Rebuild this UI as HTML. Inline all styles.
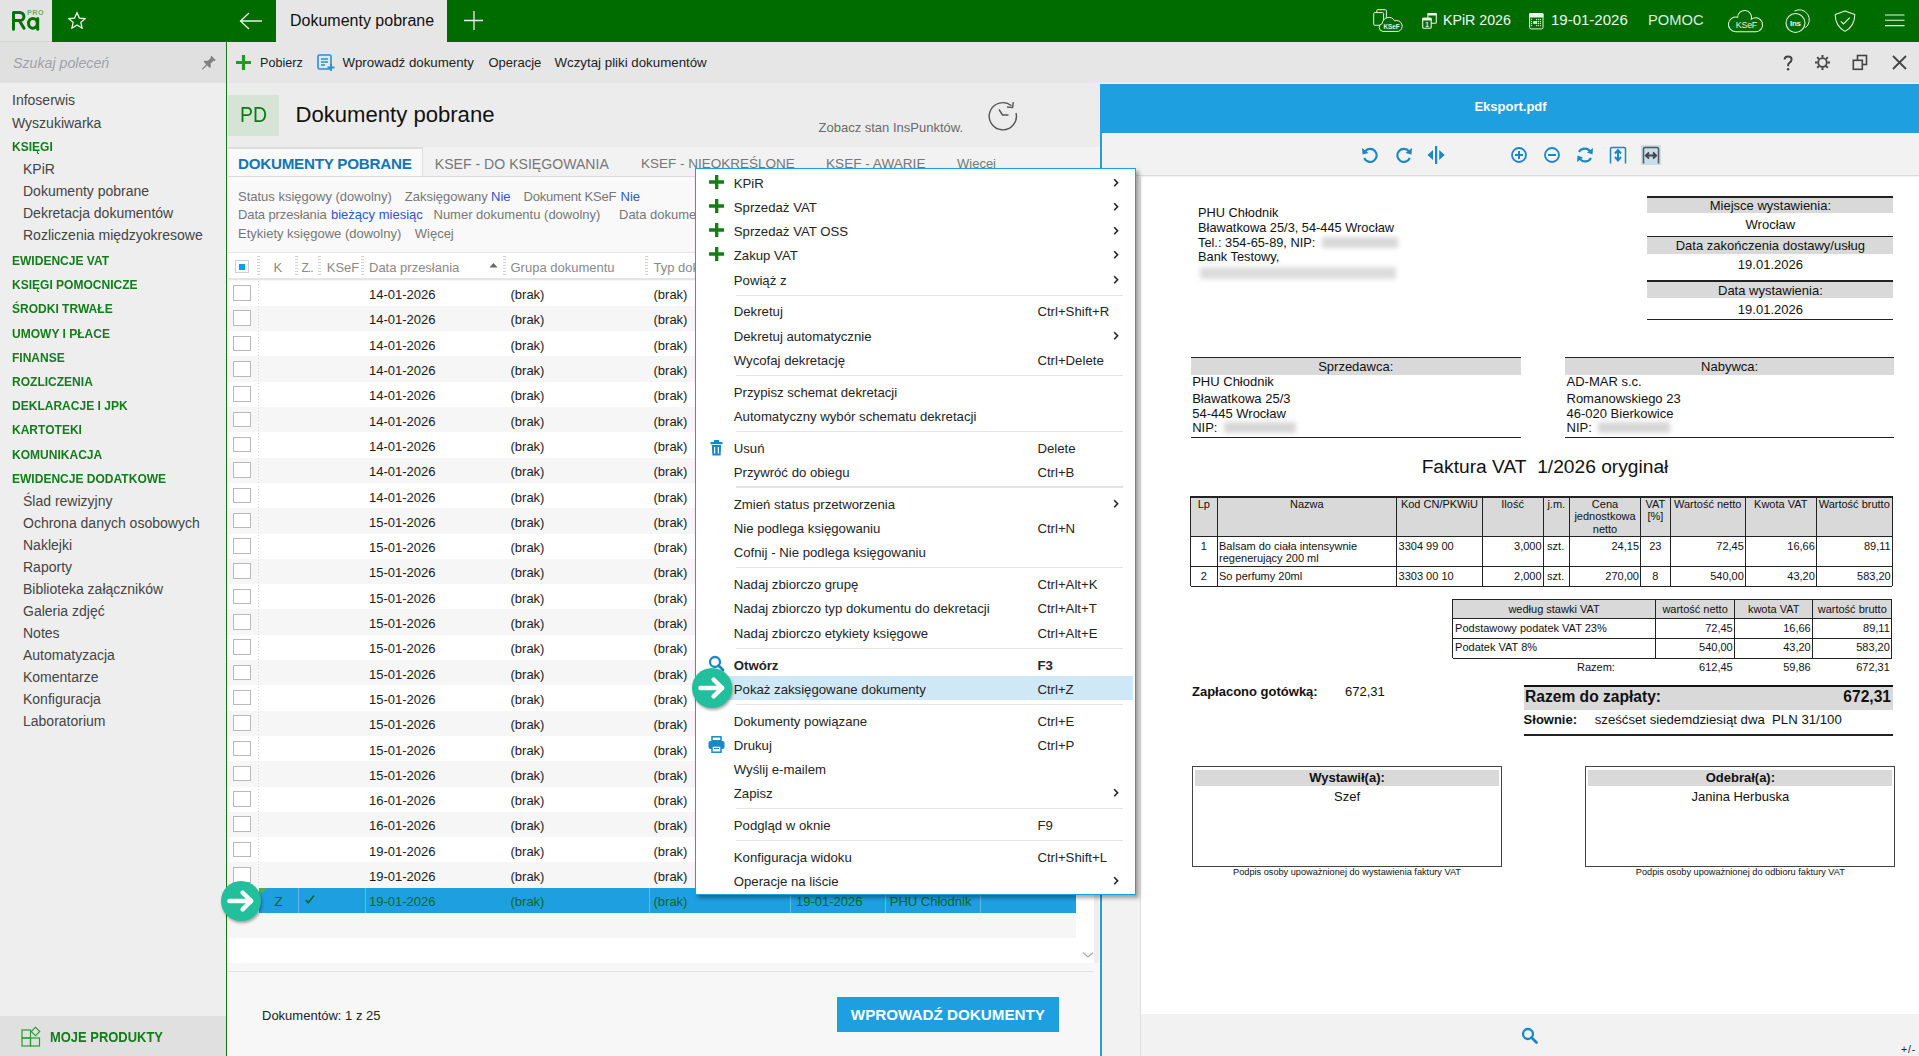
<!DOCTYPE html>
<html><head><meta charset="utf-8"><title>Dokumenty pobrane</title>
<style>
html,body{margin:0;padding:0;}
body{width:1919px;height:1056px;overflow:hidden;position:relative;font-family:"Liberation Sans",sans-serif;background:#f7f7f7;}
.r{position:absolute;}
.t{position:absolute;white-space:nowrap;}
</style></head><body>

<div class="r" style="left:0px;top:0px;width:1919px;height:42px;background:#006c00;"></div>
<div class="r" style="left:0px;top:0px;width:52px;height:42px;background:#e3e3e3;"></div>
<div class="r" style="left:0px;top:41px;width:52px;height:1px;background:#cfdccf;"></div>
<svg class="r" style="left:0px;top:0px;" width="52" height="42" viewBox="0 0 52 42"><path d="M13.5 29.2 V12.4 H19.8 A4.1 4.1 0 0 1 19.8 20.6 H14 M19.6 21 L24 28.3" stroke="#017301" stroke-width="3" fill="none" stroke-linecap="round" stroke-linejoin="round"/><ellipse cx="32.9" cy="23.3" rx="4.4" ry="4.9" fill="none" stroke="#017301" stroke-width="3"/><path d="M37.7 18.4 V29.2" stroke="#017301" stroke-width="3" stroke-linecap="round"/><text x="27" y="15.2" font-size="7.2" font-family="Liberation Sans" font-weight="700" fill="#6aae6e" letter-spacing="0.55">PRO</text></svg>
<svg class="r" style="left:66px;top:10px;" width="22" height="21" viewBox="0 0 22 21"><g transform="translate(11 10.5) scale(0.9) translate(-11 -10.5)"><path d="M11 1.5 L13.6 7.8 L20.3 8.3 L15.2 12.6 L16.8 19.2 L11 15.6 L5.2 19.2 L6.8 12.6 L1.7 8.3 L8.4 7.8 Z" fill="none" stroke="#fff" stroke-width="1.35" stroke-linejoin="round"/></g></svg>
<svg class="r" style="left:238px;top:10px;" width="26" height="22" viewBox="0 0 26 22"><path d="M24 11 H3 M11 3 L2.5 11 L11 19" fill="none" stroke="#e8f0e8" stroke-width="1.3"/></svg>
<div class="r" style="left:276px;top:0px;width:171px;height:42px;background:#e6e6e6;"></div>
<div class="t" style="left:290px;top:10.50px;font-size:16px;line-height:20px;color:#111;font-weight:400;">Dokumenty pobrane</div>
<svg class="r" style="left:464px;top:11px;" width="20" height="20" viewBox="0 0 20 20"><path d="M10 0 V19 M0 9.5 H19" fill="none" stroke="#e8f0e8" stroke-width="1.3"/></svg>
<svg class="r" style="left:1368px;top:4px;" width="40" height="32" viewBox="0 0 40 32"><rect x="8.8" y="5.7" width="9.6" height="13" rx="1" fill="none" stroke="#e9f3e9" stroke-width="1"/><rect x="5.7" y="8.6" width="9.9" height="12.7" rx="1" fill="#006c00" stroke="#e9f3e9" stroke-width="1"/><path d="M15 27.4 A4 4 0 0 1 14.3 19.5 A6.6 6.6 0 0 1 26.6 16.8 A5.3 5.3 0 0 1 30.5 27.4 Z" fill="#006c00" stroke="#e9f3e9" stroke-width="1"/><text x="23.6" y="24.6" font-size="6.4" font-family="Liberation Sans" font-weight="700" fill="#e9f3e9" text-anchor="middle">KSeF</text></svg>
<svg class="r" style="left:1420px;top:11px;" width="20" height="20" viewBox="0 0 20 20"><rect x="7.9" y="2.5" width="8.4" height="9.8" rx="1" fill="none" stroke="#e9f3e9" stroke-width="1.1"/><rect x="7.4" y="2" width="9.4" height="2.6" rx="1" fill="#e9f3e9"/><rect x="2.7" y="7.3" width="8.5" height="10" rx="1" fill="#006c00" stroke="#e9f3e9" stroke-width="1.1"/><rect x="2.2" y="6.8" width="9.5" height="2.6" rx="1" fill="#e9f3e9"/><text x="7" y="16.4" font-size="6.5" font-family="Liberation Sans" font-weight="700" fill="#e9f3e9" text-anchor="middle">1</text></svg>
<div class="t" style="left:1443px;top:10.50px;font-size:14.2px;line-height:18px;color:#f2f6f2;font-weight:400;">KPiR 2026</div>
<svg class="r" style="left:1528px;top:12px;" width="17" height="18" viewBox="0 0 17 18"><rect x="1.6" y="1.5" width="13.4" height="15.4" rx="1.5" fill="none" stroke="#e9f3e9" stroke-width="1"/><rect x="1.1" y="1" width="14.4" height="4.4" rx="1.2" fill="#e9f3e9"/><circle cx="3.5" cy="7.35" r="0.65" fill="#e9f3e9"/><circle cx="3.5" cy="9.5" r="0.65" fill="#e9f3e9"/><circle cx="3.5" cy="11.5" r="0.65" fill="#e9f3e9"/><circle cx="3.5" cy="13.6" r="0.65" fill="#e9f3e9"/><circle cx="8.6" cy="7.35" r="0.65" fill="#e9f3e9"/><circle cx="8.6" cy="9.5" r="0.65" fill="#e9f3e9"/><circle cx="8.6" cy="11.5" r="0.65" fill="#e9f3e9"/><circle cx="8.6" cy="13.6" r="0.65" fill="#e9f3e9"/><circle cx="10.5" cy="7.35" r="0.65" fill="#e9f3e9"/><circle cx="10.5" cy="9.5" r="0.65" fill="#e9f3e9"/><circle cx="10.5" cy="11.5" r="0.65" fill="#e9f3e9"/><circle cx="10.5" cy="13.6" r="0.65" fill="#e9f3e9"/><circle cx="12.45" cy="7.35" r="0.65" fill="#e9f3e9"/><circle cx="12.45" cy="9.5" r="0.65" fill="#e9f3e9"/><circle cx="12.45" cy="11.5" r="0.65" fill="#e9f3e9"/><circle cx="12.45" cy="13.6" r="0.65" fill="#e9f3e9"/><rect x="5.2" y="9.2" width="3.8" height="2.6" fill="#e9f3e9"/></svg>
<div class="t" style="left:1551px;top:10.50px;font-size:15px;line-height:18px;color:#f2f6f2;font-weight:400;">19-01-2026</div>
<div class="t" style="left:1648px;top:10.50px;font-size:14.7px;line-height:18px;color:#dfeadf;font-weight:400;">POMOC</div>
<svg class="r" style="left:1726px;top:9px;" width="38" height="25" viewBox="0 0 38 25"><path d="M9.7 22.7 A7.3 7.3 0 1 1 11.6 8.35 A7 7 0 1 1 25.4 10.1 A7 7 0 1 1 29.7 22.7 Z" fill="none" stroke="#e9f3e9" stroke-width="1.05"/><text x="20.4" y="18.7" font-size="8.8" font-family="Liberation Sans" fill="#e9f3e9" text-anchor="middle" letter-spacing="-0.2">KSeF</text></svg>
<svg class="r" style="left:1784px;top:9px;" width="28" height="26" viewBox="0 0 28 26"><circle cx="11.5" cy="14" r="9.5" fill="none" stroke="#e9f3e9" stroke-width="1.05"/><path d="M10.5 2 A10 10 0 0 1 21.4 18.7" fill="none" stroke="#e9f3e9" stroke-width="1"/><text x="11.4" y="17" font-size="8" font-family="Liberation Sans" font-weight="700" fill="#e9f3e9" text-anchor="middle" letter-spacing="-0.3">Ins</text></svg>
<svg class="r" style="left:1834px;top:9px;" width="22" height="24" viewBox="0 0 22 24"><path d="M11 1.9 L20.8 5.4 C20.8 13.5 17 19 11 22.4 C5 19 1.2 13.5 1.2 5.4 Z" fill="none" stroke="#e9f3e9" stroke-width="1.05" stroke-linejoin="round"/><path d="M6.8 12.3 L9.5 14.9 L15.8 8.6" fill="none" stroke="#e9f3e9" stroke-width="1.1"/></svg>
<svg class="r" style="left:1882px;top:12px;" width="24" height="16" viewBox="0 0 24 16"><path d="M3 3 H22.5 M3 8.3 H22.5 M3 13.6 H22.5" stroke="#e9f3e9" stroke-width="1.1"/></svg>
<div class="r" style="left:0px;top:42px;width:226px;height:1014px;background:#eeeeee;"></div>
<div class="r" style="left:0px;top:42px;width:226px;height:41px;background:#e0e0e0;"></div>
<div class="t" style="left:13px;top:53.00px;font-size:14.2px;line-height:20px;color:#a0a0a8;font-weight:400;font-style:italic;">Szukaj poleceń</div>
<svg class="r" style="left:200px;top:55px;" width="16" height="16" viewBox="0 0 16 16"><g transform="translate(8 8.5) rotate(45) scale(1.15)"><path d="M-2.6 -6.8 H2.6 V-5.8 L1.7 -5.2 V-1.6 L3.8 0.4 V1.6 H-3.8 V0.4 L-1.7 -1.6 V-5.2 L-2.6 -5.8 Z" fill="#808080"/><path d="M0 1.5 V6.6" stroke="#808080" stroke-width="1.1" stroke-linecap="round"/></g></svg>
<div class="t" style="left:12px;top:90.00px;font-size:14px;line-height:20px;color:#444444;font-weight:400;">Infoserwis</div>
<div class="t" style="left:12px;top:113.00px;font-size:14px;line-height:20px;color:#444444;font-weight:400;">Wyszukiwarka</div>
<div class="t" style="left:12px;top:136.80px;font-size:13px;line-height:20px;color:#137c1b;font-weight:700;transform:scaleX(0.925);transform-origin:0 0;">KSIĘGI</div>
<div class="t" style="left:23px;top:159.00px;font-size:14px;line-height:20px;color:#444444;font-weight:400;">KPiR</div>
<div class="t" style="left:23px;top:181.00px;font-size:14px;line-height:20px;color:#444444;font-weight:400;">Dokumenty pobrane</div>
<div class="t" style="left:23px;top:203.30px;font-size:14px;line-height:20px;color:#444444;font-weight:400;">Dekretacja dokumentów</div>
<div class="t" style="left:23px;top:225.30px;font-size:14px;line-height:20px;color:#444444;font-weight:400;">Rozliczenia międzyokresowe</div>
<div class="t" style="left:12px;top:250.80px;font-size:13px;line-height:20px;color:#137c1b;font-weight:700;transform:scaleX(0.925);transform-origin:0 0;">EWIDENCJE VAT</div>
<div class="t" style="left:12px;top:274.90px;font-size:13px;line-height:20px;color:#137c1b;font-weight:700;transform:scaleX(0.925);transform-origin:0 0;">KSIĘGI POMOCNICZE</div>
<div class="t" style="left:12px;top:299.00px;font-size:13px;line-height:20px;color:#137c1b;font-weight:700;transform:scaleX(0.925);transform-origin:0 0;">ŚRODKI TRWAŁE</div>
<div class="t" style="left:12px;top:323.60px;font-size:13px;line-height:20px;color:#137c1b;font-weight:700;transform:scaleX(0.925);transform-origin:0 0;">UMOWY I PŁACE</div>
<div class="t" style="left:12px;top:347.60px;font-size:13px;line-height:20px;color:#137c1b;font-weight:700;transform:scaleX(0.925);transform-origin:0 0;">FINANSE</div>
<div class="t" style="left:12px;top:371.90px;font-size:13px;line-height:20px;color:#137c1b;font-weight:700;transform:scaleX(0.925);transform-origin:0 0;">ROZLICZENIA</div>
<div class="t" style="left:12px;top:395.70px;font-size:13px;line-height:20px;color:#137c1b;font-weight:700;transform:scaleX(0.925);transform-origin:0 0;">DEKLARACJE I JPK</div>
<div class="t" style="left:12px;top:419.90px;font-size:13px;line-height:20px;color:#137c1b;font-weight:700;transform:scaleX(0.925);transform-origin:0 0;">KARTOTEKI</div>
<div class="t" style="left:12px;top:444.60px;font-size:13px;line-height:20px;color:#137c1b;font-weight:700;transform:scaleX(0.925);transform-origin:0 0;">KOMUNIKACJA</div>
<div class="t" style="left:12px;top:468.80px;font-size:13px;line-height:20px;color:#137c1b;font-weight:700;transform:scaleX(0.925);transform-origin:0 0;">EWIDENCJE DODATKOWE</div>
<div class="t" style="left:23px;top:491.00px;font-size:14px;line-height:20px;color:#444444;font-weight:400;">Ślad rewizyjny</div>
<div class="t" style="left:23px;top:513.00px;font-size:14px;line-height:20px;color:#444444;font-weight:400;">Ochrona danych osobowych</div>
<div class="t" style="left:23px;top:535.00px;font-size:14px;line-height:20px;color:#444444;font-weight:400;">Naklejki</div>
<div class="t" style="left:23px;top:557.00px;font-size:14px;line-height:20px;color:#444444;font-weight:400;">Raporty</div>
<div class="t" style="left:23px;top:579.00px;font-size:14px;line-height:20px;color:#444444;font-weight:400;">Biblioteka załączników</div>
<div class="t" style="left:23px;top:601.00px;font-size:14px;line-height:20px;color:#444444;font-weight:400;">Galeria zdjęć</div>
<div class="t" style="left:23px;top:623.00px;font-size:14px;line-height:20px;color:#444444;font-weight:400;">Notes</div>
<div class="t" style="left:23px;top:645.00px;font-size:14px;line-height:20px;color:#444444;font-weight:400;">Automatyzacja</div>
<div class="t" style="left:23px;top:667.00px;font-size:14px;line-height:20px;color:#444444;font-weight:400;">Komentarze</div>
<div class="t" style="left:23px;top:689.00px;font-size:14px;line-height:20px;color:#444444;font-weight:400;">Konfiguracja</div>
<div class="t" style="left:23px;top:711.00px;font-size:14px;line-height:20px;color:#444444;font-weight:400;">Laboratorium</div>
<div class="r" style="left:0px;top:1016px;width:226px;height:40px;background:#e0e0e0;"></div>
<svg class="r" style="left:21px;top:1026px;" width="20" height="21" viewBox="0 0 20 21"><rect x="1" y="4" width="8.5" height="8" fill="none" stroke="#2a9a33" stroke-width="1.2"/><rect x="1" y="12" width="8.5" height="8" fill="none" stroke="#2a9a33" stroke-width="1.2"/><rect x="9.5" y="12" width="9" height="8" fill="none" stroke="#2a9a33" stroke-width="1.2"/><rect x="11.5" y="2.5" width="6" height="6" transform="rotate(45 14.5 5.5)" fill="#e0e0e0" stroke="#2a9a33" stroke-width="1.2"/></svg>
<div class="t" style="left:50px;top:1026.5px;font-size:14px;line-height:20px;color:#0f7d18;font-weight:700;transform:scaleX(0.925);transform-origin:0 0;">MOJE PRODUKTY</div>
<div class="r" style="left:226px;top:42px;width:1.2px;height:1014px;background:#137a13;"></div>
<div class="r" style="left:227.6px;top:42px;width:1691.4px;height:41px;background:#e6e6e6;"></div>
<svg class="r" style="left:236px;top:55px;" width="15" height="15" viewBox="0 0 15 15"><path d="M7.5 0 V15 M0 7.5 H15" stroke="#1f9a2a" stroke-width="3.2"/></svg>
<div class="t" style="left:260px;top:54.20px;font-size:12.6px;line-height:18px;color:#222;font-weight:400;">Pobierz</div>
<svg class="r" style="left:317px;top:54px;" width="19" height="18" viewBox="0 0 19 18"><rect x="1" y="1" width="13" height="14" rx="1.5" fill="none" stroke="#2a8fd4" stroke-width="1.6"/><path d="M4 5 H11 M4 8 H11 M4 11 H8" stroke="#2a8fd4" stroke-width="1.3"/><path d="M14 10 V17 M10.5 13.5 H17.5" stroke="#2a8fd4" stroke-width="1.8"/></svg>
<div class="t" style="left:342.4px;top:54.20px;font-size:13.3px;line-height:18px;color:#222;font-weight:400;">Wprowadź dokumenty</div>
<div class="t" style="left:488.5px;top:54.20px;font-size:13px;line-height:18px;color:#222;font-weight:400;">Operacje</div>
<div class="t" style="left:554.5px;top:54.20px;font-size:13.3px;line-height:18px;color:#222;font-weight:400;">Wczytaj pliki dokumentów</div>
<svg class="r" style="left:1780px;top:53px;" width="16" height="20" viewBox="0 0 16 20"><path d="M4.6 6.6 Q4.6 3.4 8.1 3.4 Q11.6 3.4 11.6 6.5 Q11.6 8.4 9.6 9.6 Q8.1 10.5 8.1 12.6 V13.2" fill="none" stroke="#444" stroke-width="2"/><circle cx="8.1" cy="16.3" r="1.25" fill="#444"/></svg>
<svg class="r" style="left:1814px;top:54px;" width="17" height="17" viewBox="0 0 17 17"><g transform="translate(8.5 8.5)" stroke="#444" stroke-width="2"><path d="M0 -7.5 V-5 M0 5 V7.5 M-7.5 0 H-5 M5 0 H7.5 M-5.3 -5.3 L-3.6 -3.6 M3.6 3.6 L5.3 5.3 M-5.3 5.3 L-3.6 3.6 M3.6 -3.6 L5.3 -5.3"/><circle r="4.3" fill="none" stroke-width="1.8"/></g></svg>
<svg class="r" style="left:1852px;top:54px;" width="16" height="17" viewBox="0 0 16 17"><rect x="5.5" y="1.5" width="9" height="9" fill="none" stroke="#444" stroke-width="1.6"/><rect x="1.3" y="6.3" width="9" height="9" fill="#e6e6e6" stroke="#444" stroke-width="1.6"/></svg>
<svg class="r" style="left:1892px;top:55px;" width="15" height="15" viewBox="0 0 15 15"><path d="M1 1 L14 14 M14 1 L1 14" stroke="#444" stroke-width="1.8"/></svg>
<div class="r" style="left:227.6px;top:83px;width:872.4px;height:64px;background:#ececec;"></div>
<div class="r" style="left:227.6px;top:95px;width:51.5px;height:40.6px;background:#d6e4d6;"></div>
<div class="t" style="left:239.5px;top:102px;font-size:22px;line-height:26px;color:#0b7a10;transform:scaleX(0.885);transform-origin:0 0;">PD</div>
<div class="t" style="left:295.5px;top:102.00px;font-size:22.1px;line-height:26px;color:#111;font-weight:400;">Dokumenty pobrane</div>
<div class="t" style="left:818.5px;top:118.80px;font-size:13px;line-height:18px;color:#6b6b6b;font-weight:400;">Zobacz stan InsPunktów.</div>
<svg class="r" style="left:987px;top:99px;" width="32" height="32" viewBox="0 0 32 32"><path d="M29 14 A13.6 13.6 0 1 1 24.5 6.8" fill="none" stroke="#555" stroke-width="1.4"/><path d="M26.3 3 L25.6 8.6 L20 8" fill="none" stroke="#555" stroke-width="1.4"/><path d="M12 10.5 L15.5 16 H21.5" fill="none" stroke="#555" stroke-width="1.4"/></svg>
<div class="r" style="left:227.6px;top:147px;width:872.4px;height:29px;background:#f2f2f2;"></div>
<div class="r" style="left:227.6px;top:175.5px;width:872.4px;height:1px;background:#dcdcdc;"></div>
<div class="r" style="left:227.6px;top:147.2px;width:195.5px;height:29.3px;background:#fafafa;"></div>
<div class="r" style="left:227.6px;top:147.2px;width:195.5px;height:1.6px;background:#dedede;"></div>
<div class="r" style="left:422.2px;top:147.2px;width:1.2px;height:28.8px;background:#dedede;"></div>
<div class="t" style="left:238px;top:153.60px;font-size:15.2px;line-height:20px;color:#1276b6;font-weight:700;letter-spacing:-0.25px;">DOKUMENTY POBRANE</div>
<div class="t" style="left:434.75px;top:153.60px;font-size:14.1px;line-height:20px;color:#777;font-weight:400;">KSEF - DO KSIĘGOWANIA</div>
<div class="t" style="left:641px;top:153.60px;font-size:13.5px;line-height:20px;color:#777;font-weight:400;">KSEF - NIEOKREŚLONE</div>
<div class="t" style="left:826px;top:153.60px;font-size:13.6px;line-height:20px;color:#777;font-weight:400;">KSEF - AWARIE</div>
<div class="t" style="left:957px;top:153.60px;font-size:13px;line-height:20px;color:#777;font-weight:400;">Więcej</div>
<div class="r" style="left:227.6px;top:176.5px;width:872.4px;height:75.5px;background:#f9f9f9;"></div>
<div class="t" style="left:238px;top:188.30px;font-size:13px;line-height:18px;color:#777;font-weight:400;">Status księgowy (dowolny)</div>
<div class="t" style="left:404.75px;top:188.30px;font-size:13px;line-height:18px;color:#777;font-weight:400;">Zaksięgowany</div>
<div class="t" style="left:491px;top:188.30px;font-size:13px;line-height:18px;color:#2f55c8;font-weight:400;">Nie</div>
<div class="t" style="left:523.5px;top:188.30px;font-size:13px;line-height:18px;color:#777;font-weight:400;letter-spacing:-0.2px;">Dokument KSeF</div>
<div class="t" style="left:620.5px;top:188.30px;font-size:13px;line-height:18px;color:#2f55c8;font-weight:400;">Nie</div>
<div class="t" style="left:238px;top:206.30px;font-size:13px;line-height:18px;color:#777;font-weight:400;letter-spacing:-0.12px;">Data przesłania</div>
<div class="t" style="left:331px;top:206.30px;font-size:13px;line-height:18px;color:#2f55c8;font-weight:400;">bieżący miesiąc</div>
<div class="t" style="left:433.5px;top:206.30px;font-size:13px;line-height:18px;color:#777;font-weight:400;">Numer dokumentu (dowolny)</div>
<div class="t" style="left:619px;top:206.30px;font-size:13px;line-height:18px;color:#777;font-weight:400;">Data dokumentu (dowolny)</div>
<div class="t" style="left:238px;top:224.50px;font-size:13px;line-height:18px;color:#777;font-weight:400;">Etykiety księgowe (dowolny)</div>
<div class="t" style="left:414.75px;top:224.50px;font-size:13px;line-height:18px;color:#777;font-weight:400;">Więcej</div>
<div class="r" style="left:227.6px;top:251.5px;width:866.4px;height:1px;background:#e6e6e6;"></div>
<div class="r" style="left:227.6px;top:252.5px;width:848.4px;height:26px;background:#ffffff;"></div>
<div class="r" style="left:1076px;top:252.5px;width:18px;height:26px;background:#ffffff;"></div>
<div class="r" style="left:227.6px;top:278.3px;width:848.4px;height:2px;background:#e4e4e4;"></div>
<div class="r" style="left:235.4px;top:260.4px;width:13.3px;height:12.3px;background:#fff;box-sizing:border-box;border:1px solid #d0d0d0;"></div>
<div class="r" style="left:239.3px;top:263.5px;width:6px;height:6px;background:#0ea0e0;"></div>
<div class="r" style="left:256.5px;top:255.5px;width:3px;height:21px;background:repeating-linear-gradient(to bottom,#d2d2d2 0 1px,transparent 1px 3px);"></div>
<div class="r" style="left:294.9px;top:255.5px;width:3px;height:21px;background:repeating-linear-gradient(to bottom,#d2d2d2 0 1px,transparent 1px 3px);"></div>
<div class="r" style="left:318.2px;top:255.5px;width:3px;height:21px;background:repeating-linear-gradient(to bottom,#d2d2d2 0 1px,transparent 1px 3px);"></div>
<div class="r" style="left:360.5px;top:255.5px;width:3px;height:21px;background:repeating-linear-gradient(to bottom,#d2d2d2 0 1px,transparent 1px 3px);"></div>
<div class="r" style="left:502.5px;top:255.5px;width:3px;height:21px;background:repeating-linear-gradient(to bottom,#d2d2d2 0 1px,transparent 1px 3px);"></div>
<div class="r" style="left:644.5px;top:255.5px;width:3px;height:21px;background:repeating-linear-gradient(to bottom,#d2d2d2 0 1px,transparent 1px 3px);"></div>
<div class="r" style="left:788.5px;top:255.5px;width:3px;height:21px;background:repeating-linear-gradient(to bottom,#d2d2d2 0 1px,transparent 1px 3px);"></div>
<div class="r" style="left:883.5px;top:255.5px;width:3px;height:21px;background:repeating-linear-gradient(to bottom,#d2d2d2 0 1px,transparent 1px 3px);"></div>
<div class="r" style="left:978.5px;top:255.5px;width:3px;height:21px;background:repeating-linear-gradient(to bottom,#d2d2d2 0 1px,transparent 1px 3px);"></div>
<div class="t" style="left:273.5px;top:258.90px;font-size:13px;line-height:18px;color:#8a8a8a;font-weight:400;">K</div>
<div class="t" style="left:301.5px;top:258.90px;font-size:12px;line-height:18px;color:#8a8a8a;font-weight:400;letter-spacing:-1px;">Z..</div>
<div class="t" style="left:326.75px;top:258.90px;font-size:13px;line-height:18px;color:#8a8a8a;font-weight:400;">KSeF</div>
<div class="t" style="left:369px;top:258.90px;font-size:13px;line-height:18px;color:#8a8a8a;font-weight:400;">Data przesłania</div>
<svg class="r" style="left:489px;top:262px;" width="10" height="6" viewBox="0 0 10 6"><path d="M0.5 5.5 L4.5 1 L8.5 5.5 Z" fill="#666"/></svg>
<div class="t" style="left:510.5px;top:258.90px;font-size:13px;line-height:18px;color:#8a8a8a;font-weight:400;">Grupa dokumentu</div>
<div class="t" style="left:653.5px;top:258.90px;font-size:13px;line-height:18px;color:#8a8a8a;font-weight:400;">Typ dokumentu</div>
<div class="t" style="left:797px;top:258.90px;font-size:13px;line-height:18px;color:#8a8a8a;font-weight:400;">Data dokumentu</div>
<div class="t" style="left:890px;top:258.90px;font-size:13px;line-height:18px;color:#8a8a8a;font-weight:400;">Kontrahent</div>
<div class="r" style="left:227.2px;top:280.5px;width:848.8px;height:25.3px;background:#ffffff;"></div>
<div class="r" style="left:233.2px;top:285.1px;width:17.7px;height:15.6px;background:#fff;box-sizing:border-box;border:1.2px solid #b9b9b9;"></div>
<div class="t" style="left:369px;top:286.10px;font-size:13px;line-height:18px;color:#1a1a1a;font-weight:400;">14-01-2026</div>
<div class="t" style="left:510.5px;top:286.10px;font-size:13px;line-height:18px;color:#1a1a1a;font-weight:400;">(brak)</div>
<div class="t" style="left:653.5px;top:286.10px;font-size:13px;line-height:18px;color:#1a1a1a;font-weight:400;">(brak)</div>
<div class="t" style="left:797px;top:286.10px;font-size:13px;line-height:18px;color:#1a1a1a;font-weight:400;">14-01-2026</div>
<div class="t" style="left:890px;top:286.10px;font-size:13px;line-height:18px;color:#1a1a1a;font-weight:400;">PHU Chłodnik</div>
<div class="r" style="left:227.2px;top:305.8px;width:848.8px;height:25.3px;background:#f6f6f6;"></div>
<div class="r" style="left:233.2px;top:310.4px;width:17.7px;height:15.6px;background:#fff;box-sizing:border-box;border:1.2px solid #b9b9b9;"></div>
<div class="t" style="left:369px;top:311.40px;font-size:13px;line-height:18px;color:#1a1a1a;font-weight:400;">14-01-2026</div>
<div class="t" style="left:510.5px;top:311.40px;font-size:13px;line-height:18px;color:#1a1a1a;font-weight:400;">(brak)</div>
<div class="t" style="left:653.5px;top:311.40px;font-size:13px;line-height:18px;color:#1a1a1a;font-weight:400;">(brak)</div>
<div class="t" style="left:797px;top:311.40px;font-size:13px;line-height:18px;color:#1a1a1a;font-weight:400;">14-01-2026</div>
<div class="t" style="left:890px;top:311.40px;font-size:13px;line-height:18px;color:#1a1a1a;font-weight:400;">PHU Chłodnik</div>
<div class="r" style="left:227.2px;top:331.1px;width:848.8px;height:25.3px;background:#ffffff;"></div>
<div class="r" style="left:233.2px;top:335.7px;width:17.7px;height:15.6px;background:#fff;box-sizing:border-box;border:1.2px solid #b9b9b9;"></div>
<div class="t" style="left:369px;top:336.70px;font-size:13px;line-height:18px;color:#1a1a1a;font-weight:400;">14-01-2026</div>
<div class="t" style="left:510.5px;top:336.70px;font-size:13px;line-height:18px;color:#1a1a1a;font-weight:400;">(brak)</div>
<div class="t" style="left:653.5px;top:336.70px;font-size:13px;line-height:18px;color:#1a1a1a;font-weight:400;">(brak)</div>
<div class="t" style="left:797px;top:336.70px;font-size:13px;line-height:18px;color:#1a1a1a;font-weight:400;">14-01-2026</div>
<div class="t" style="left:890px;top:336.70px;font-size:13px;line-height:18px;color:#1a1a1a;font-weight:400;">PHU Chłodnik</div>
<div class="r" style="left:227.2px;top:356.4px;width:848.8px;height:25.3px;background:#f6f6f6;"></div>
<div class="r" style="left:233.2px;top:361.0px;width:17.7px;height:15.6px;background:#fff;box-sizing:border-box;border:1.2px solid #b9b9b9;"></div>
<div class="t" style="left:369px;top:362.00px;font-size:13px;line-height:18px;color:#1a1a1a;font-weight:400;">14-01-2026</div>
<div class="t" style="left:510.5px;top:362.00px;font-size:13px;line-height:18px;color:#1a1a1a;font-weight:400;">(brak)</div>
<div class="t" style="left:653.5px;top:362.00px;font-size:13px;line-height:18px;color:#1a1a1a;font-weight:400;">(brak)</div>
<div class="t" style="left:797px;top:362.00px;font-size:13px;line-height:18px;color:#1a1a1a;font-weight:400;">14-01-2026</div>
<div class="t" style="left:890px;top:362.00px;font-size:13px;line-height:18px;color:#1a1a1a;font-weight:400;">PHU Chłodnik</div>
<div class="r" style="left:227.2px;top:381.7px;width:848.8px;height:25.3px;background:#ffffff;"></div>
<div class="r" style="left:233.2px;top:386.3px;width:17.7px;height:15.6px;background:#fff;box-sizing:border-box;border:1.2px solid #b9b9b9;"></div>
<div class="t" style="left:369px;top:387.30px;font-size:13px;line-height:18px;color:#1a1a1a;font-weight:400;">14-01-2026</div>
<div class="t" style="left:510.5px;top:387.30px;font-size:13px;line-height:18px;color:#1a1a1a;font-weight:400;">(brak)</div>
<div class="t" style="left:653.5px;top:387.30px;font-size:13px;line-height:18px;color:#1a1a1a;font-weight:400;">(brak)</div>
<div class="t" style="left:797px;top:387.30px;font-size:13px;line-height:18px;color:#1a1a1a;font-weight:400;">14-01-2026</div>
<div class="t" style="left:890px;top:387.30px;font-size:13px;line-height:18px;color:#1a1a1a;font-weight:400;">PHU Chłodnik</div>
<div class="r" style="left:227.2px;top:407.0px;width:848.8px;height:25.3px;background:#f6f6f6;"></div>
<div class="r" style="left:233.2px;top:411.6px;width:17.7px;height:15.6px;background:#fff;box-sizing:border-box;border:1.2px solid #b9b9b9;"></div>
<div class="t" style="left:369px;top:412.60px;font-size:13px;line-height:18px;color:#1a1a1a;font-weight:400;">14-01-2026</div>
<div class="t" style="left:510.5px;top:412.60px;font-size:13px;line-height:18px;color:#1a1a1a;font-weight:400;">(brak)</div>
<div class="t" style="left:653.5px;top:412.60px;font-size:13px;line-height:18px;color:#1a1a1a;font-weight:400;">(brak)</div>
<div class="t" style="left:797px;top:412.60px;font-size:13px;line-height:18px;color:#1a1a1a;font-weight:400;">14-01-2026</div>
<div class="t" style="left:890px;top:412.60px;font-size:13px;line-height:18px;color:#1a1a1a;font-weight:400;">PHU Chłodnik</div>
<div class="r" style="left:227.2px;top:432.3px;width:848.8px;height:25.3px;background:#ffffff;"></div>
<div class="r" style="left:233.2px;top:436.9px;width:17.7px;height:15.6px;background:#fff;box-sizing:border-box;border:1.2px solid #b9b9b9;"></div>
<div class="t" style="left:369px;top:437.90px;font-size:13px;line-height:18px;color:#1a1a1a;font-weight:400;">14-01-2026</div>
<div class="t" style="left:510.5px;top:437.90px;font-size:13px;line-height:18px;color:#1a1a1a;font-weight:400;">(brak)</div>
<div class="t" style="left:653.5px;top:437.90px;font-size:13px;line-height:18px;color:#1a1a1a;font-weight:400;">(brak)</div>
<div class="t" style="left:797px;top:437.90px;font-size:13px;line-height:18px;color:#1a1a1a;font-weight:400;">14-01-2026</div>
<div class="t" style="left:890px;top:437.90px;font-size:13px;line-height:18px;color:#1a1a1a;font-weight:400;">PHU Chłodnik</div>
<div class="r" style="left:227.2px;top:457.6px;width:848.8px;height:25.3px;background:#f6f6f6;"></div>
<div class="r" style="left:233.2px;top:462.2px;width:17.7px;height:15.6px;background:#fff;box-sizing:border-box;border:1.2px solid #b9b9b9;"></div>
<div class="t" style="left:369px;top:463.20px;font-size:13px;line-height:18px;color:#1a1a1a;font-weight:400;">14-01-2026</div>
<div class="t" style="left:510.5px;top:463.20px;font-size:13px;line-height:18px;color:#1a1a1a;font-weight:400;">(brak)</div>
<div class="t" style="left:653.5px;top:463.20px;font-size:13px;line-height:18px;color:#1a1a1a;font-weight:400;">(brak)</div>
<div class="t" style="left:797px;top:463.20px;font-size:13px;line-height:18px;color:#1a1a1a;font-weight:400;">14-01-2026</div>
<div class="t" style="left:890px;top:463.20px;font-size:13px;line-height:18px;color:#1a1a1a;font-weight:400;">PHU Chłodnik</div>
<div class="r" style="left:227.2px;top:482.9px;width:848.8px;height:25.3px;background:#ffffff;"></div>
<div class="r" style="left:233.2px;top:487.5px;width:17.7px;height:15.6px;background:#fff;box-sizing:border-box;border:1.2px solid #b9b9b9;"></div>
<div class="t" style="left:369px;top:488.50px;font-size:13px;line-height:18px;color:#1a1a1a;font-weight:400;">14-01-2026</div>
<div class="t" style="left:510.5px;top:488.50px;font-size:13px;line-height:18px;color:#1a1a1a;font-weight:400;">(brak)</div>
<div class="t" style="left:653.5px;top:488.50px;font-size:13px;line-height:18px;color:#1a1a1a;font-weight:400;">(brak)</div>
<div class="t" style="left:797px;top:488.50px;font-size:13px;line-height:18px;color:#1a1a1a;font-weight:400;">14-01-2026</div>
<div class="t" style="left:890px;top:488.50px;font-size:13px;line-height:18px;color:#1a1a1a;font-weight:400;">PHU Chłodnik</div>
<div class="r" style="left:227.2px;top:508.2px;width:848.8px;height:25.3px;background:#f6f6f6;"></div>
<div class="r" style="left:233.2px;top:512.8px;width:17.7px;height:15.6px;background:#fff;box-sizing:border-box;border:1.2px solid #b9b9b9;"></div>
<div class="t" style="left:369px;top:513.80px;font-size:13px;line-height:18px;color:#1a1a1a;font-weight:400;">15-01-2026</div>
<div class="t" style="left:510.5px;top:513.80px;font-size:13px;line-height:18px;color:#1a1a1a;font-weight:400;">(brak)</div>
<div class="t" style="left:653.5px;top:513.80px;font-size:13px;line-height:18px;color:#1a1a1a;font-weight:400;">(brak)</div>
<div class="t" style="left:797px;top:513.80px;font-size:13px;line-height:18px;color:#1a1a1a;font-weight:400;">15-01-2026</div>
<div class="t" style="left:890px;top:513.80px;font-size:13px;line-height:18px;color:#1a1a1a;font-weight:400;">PHU Chłodnik</div>
<div class="r" style="left:227.2px;top:533.5px;width:848.8px;height:25.3px;background:#ffffff;"></div>
<div class="r" style="left:233.2px;top:538.1px;width:17.7px;height:15.6px;background:#fff;box-sizing:border-box;border:1.2px solid #b9b9b9;"></div>
<div class="t" style="left:369px;top:539.10px;font-size:13px;line-height:18px;color:#1a1a1a;font-weight:400;">15-01-2026</div>
<div class="t" style="left:510.5px;top:539.10px;font-size:13px;line-height:18px;color:#1a1a1a;font-weight:400;">(brak)</div>
<div class="t" style="left:653.5px;top:539.10px;font-size:13px;line-height:18px;color:#1a1a1a;font-weight:400;">(brak)</div>
<div class="t" style="left:797px;top:539.10px;font-size:13px;line-height:18px;color:#1a1a1a;font-weight:400;">15-01-2026</div>
<div class="t" style="left:890px;top:539.10px;font-size:13px;line-height:18px;color:#1a1a1a;font-weight:400;">PHU Chłodnik</div>
<div class="r" style="left:227.2px;top:558.8px;width:848.8px;height:25.3px;background:#f6f6f6;"></div>
<div class="r" style="left:233.2px;top:563.4px;width:17.7px;height:15.6px;background:#fff;box-sizing:border-box;border:1.2px solid #b9b9b9;"></div>
<div class="t" style="left:369px;top:564.40px;font-size:13px;line-height:18px;color:#1a1a1a;font-weight:400;">15-01-2026</div>
<div class="t" style="left:510.5px;top:564.40px;font-size:13px;line-height:18px;color:#1a1a1a;font-weight:400;">(brak)</div>
<div class="t" style="left:653.5px;top:564.40px;font-size:13px;line-height:18px;color:#1a1a1a;font-weight:400;">(brak)</div>
<div class="t" style="left:797px;top:564.40px;font-size:13px;line-height:18px;color:#1a1a1a;font-weight:400;">15-01-2026</div>
<div class="t" style="left:890px;top:564.40px;font-size:13px;line-height:18px;color:#1a1a1a;font-weight:400;">PHU Chłodnik</div>
<div class="r" style="left:227.2px;top:584.1px;width:848.8px;height:25.3px;background:#ffffff;"></div>
<div class="r" style="left:233.2px;top:588.7px;width:17.7px;height:15.6px;background:#fff;box-sizing:border-box;border:1.2px solid #b9b9b9;"></div>
<div class="t" style="left:369px;top:589.70px;font-size:13px;line-height:18px;color:#1a1a1a;font-weight:400;">15-01-2026</div>
<div class="t" style="left:510.5px;top:589.70px;font-size:13px;line-height:18px;color:#1a1a1a;font-weight:400;">(brak)</div>
<div class="t" style="left:653.5px;top:589.70px;font-size:13px;line-height:18px;color:#1a1a1a;font-weight:400;">(brak)</div>
<div class="t" style="left:797px;top:589.70px;font-size:13px;line-height:18px;color:#1a1a1a;font-weight:400;">15-01-2026</div>
<div class="t" style="left:890px;top:589.70px;font-size:13px;line-height:18px;color:#1a1a1a;font-weight:400;">PHU Chłodnik</div>
<div class="r" style="left:227.2px;top:609.4px;width:848.8px;height:25.3px;background:#f6f6f6;"></div>
<div class="r" style="left:233.2px;top:614.0px;width:17.7px;height:15.6px;background:#fff;box-sizing:border-box;border:1.2px solid #b9b9b9;"></div>
<div class="t" style="left:369px;top:615.00px;font-size:13px;line-height:18px;color:#1a1a1a;font-weight:400;">15-01-2026</div>
<div class="t" style="left:510.5px;top:615.00px;font-size:13px;line-height:18px;color:#1a1a1a;font-weight:400;">(brak)</div>
<div class="t" style="left:653.5px;top:615.00px;font-size:13px;line-height:18px;color:#1a1a1a;font-weight:400;">(brak)</div>
<div class="t" style="left:797px;top:615.00px;font-size:13px;line-height:18px;color:#1a1a1a;font-weight:400;">15-01-2026</div>
<div class="t" style="left:890px;top:615.00px;font-size:13px;line-height:18px;color:#1a1a1a;font-weight:400;">PHU Chłodnik</div>
<div class="r" style="left:227.2px;top:634.7px;width:848.8px;height:25.3px;background:#ffffff;"></div>
<div class="r" style="left:233.2px;top:639.3px;width:17.7px;height:15.6px;background:#fff;box-sizing:border-box;border:1.2px solid #b9b9b9;"></div>
<div class="t" style="left:369px;top:640.30px;font-size:13px;line-height:18px;color:#1a1a1a;font-weight:400;">15-01-2026</div>
<div class="t" style="left:510.5px;top:640.30px;font-size:13px;line-height:18px;color:#1a1a1a;font-weight:400;">(brak)</div>
<div class="t" style="left:653.5px;top:640.30px;font-size:13px;line-height:18px;color:#1a1a1a;font-weight:400;">(brak)</div>
<div class="t" style="left:797px;top:640.30px;font-size:13px;line-height:18px;color:#1a1a1a;font-weight:400;">15-01-2026</div>
<div class="t" style="left:890px;top:640.30px;font-size:13px;line-height:18px;color:#1a1a1a;font-weight:400;">PHU Chłodnik</div>
<div class="r" style="left:227.2px;top:660.0px;width:848.8px;height:25.3px;background:#f6f6f6;"></div>
<div class="r" style="left:233.2px;top:664.6px;width:17.7px;height:15.6px;background:#fff;box-sizing:border-box;border:1.2px solid #b9b9b9;"></div>
<div class="t" style="left:369px;top:665.60px;font-size:13px;line-height:18px;color:#1a1a1a;font-weight:400;">15-01-2026</div>
<div class="t" style="left:510.5px;top:665.60px;font-size:13px;line-height:18px;color:#1a1a1a;font-weight:400;">(brak)</div>
<div class="t" style="left:653.5px;top:665.60px;font-size:13px;line-height:18px;color:#1a1a1a;font-weight:400;">(brak)</div>
<div class="t" style="left:797px;top:665.60px;font-size:13px;line-height:18px;color:#1a1a1a;font-weight:400;">15-01-2026</div>
<div class="t" style="left:890px;top:665.60px;font-size:13px;line-height:18px;color:#1a1a1a;font-weight:400;">PHU Chłodnik</div>
<div class="r" style="left:227.2px;top:685.3px;width:848.8px;height:25.3px;background:#ffffff;"></div>
<div class="r" style="left:233.2px;top:689.9px;width:17.7px;height:15.6px;background:#fff;box-sizing:border-box;border:1.2px solid #b9b9b9;"></div>
<div class="t" style="left:369px;top:690.90px;font-size:13px;line-height:18px;color:#1a1a1a;font-weight:400;">15-01-2026</div>
<div class="t" style="left:510.5px;top:690.90px;font-size:13px;line-height:18px;color:#1a1a1a;font-weight:400;">(brak)</div>
<div class="t" style="left:653.5px;top:690.90px;font-size:13px;line-height:18px;color:#1a1a1a;font-weight:400;">(brak)</div>
<div class="t" style="left:797px;top:690.90px;font-size:13px;line-height:18px;color:#1a1a1a;font-weight:400;">15-01-2026</div>
<div class="t" style="left:890px;top:690.90px;font-size:13px;line-height:18px;color:#1a1a1a;font-weight:400;">PHU Chłodnik</div>
<div class="r" style="left:227.2px;top:710.6px;width:848.8px;height:25.3px;background:#f6f6f6;"></div>
<div class="r" style="left:233.2px;top:715.2px;width:17.7px;height:15.6px;background:#fff;box-sizing:border-box;border:1.2px solid #b9b9b9;"></div>
<div class="t" style="left:369px;top:716.20px;font-size:13px;line-height:18px;color:#1a1a1a;font-weight:400;">15-01-2026</div>
<div class="t" style="left:510.5px;top:716.20px;font-size:13px;line-height:18px;color:#1a1a1a;font-weight:400;">(brak)</div>
<div class="t" style="left:653.5px;top:716.20px;font-size:13px;line-height:18px;color:#1a1a1a;font-weight:400;">(brak)</div>
<div class="t" style="left:797px;top:716.20px;font-size:13px;line-height:18px;color:#1a1a1a;font-weight:400;">15-01-2026</div>
<div class="t" style="left:890px;top:716.20px;font-size:13px;line-height:18px;color:#1a1a1a;font-weight:400;">PHU Chłodnik</div>
<div class="r" style="left:227.2px;top:735.9px;width:848.8px;height:25.3px;background:#ffffff;"></div>
<div class="r" style="left:233.2px;top:740.5px;width:17.7px;height:15.6px;background:#fff;box-sizing:border-box;border:1.2px solid #b9b9b9;"></div>
<div class="t" style="left:369px;top:741.50px;font-size:13px;line-height:18px;color:#1a1a1a;font-weight:400;">15-01-2026</div>
<div class="t" style="left:510.5px;top:741.50px;font-size:13px;line-height:18px;color:#1a1a1a;font-weight:400;">(brak)</div>
<div class="t" style="left:653.5px;top:741.50px;font-size:13px;line-height:18px;color:#1a1a1a;font-weight:400;">(brak)</div>
<div class="t" style="left:797px;top:741.50px;font-size:13px;line-height:18px;color:#1a1a1a;font-weight:400;">15-01-2026</div>
<div class="t" style="left:890px;top:741.50px;font-size:13px;line-height:18px;color:#1a1a1a;font-weight:400;">PHU Chłodnik</div>
<div class="r" style="left:227.2px;top:761.2px;width:848.8px;height:25.3px;background:#f6f6f6;"></div>
<div class="r" style="left:233.2px;top:765.8px;width:17.7px;height:15.6px;background:#fff;box-sizing:border-box;border:1.2px solid #b9b9b9;"></div>
<div class="t" style="left:369px;top:766.80px;font-size:13px;line-height:18px;color:#1a1a1a;font-weight:400;">15-01-2026</div>
<div class="t" style="left:510.5px;top:766.80px;font-size:13px;line-height:18px;color:#1a1a1a;font-weight:400;">(brak)</div>
<div class="t" style="left:653.5px;top:766.80px;font-size:13px;line-height:18px;color:#1a1a1a;font-weight:400;">(brak)</div>
<div class="t" style="left:797px;top:766.80px;font-size:13px;line-height:18px;color:#1a1a1a;font-weight:400;">15-01-2026</div>
<div class="t" style="left:890px;top:766.80px;font-size:13px;line-height:18px;color:#1a1a1a;font-weight:400;">PHU Chłodnik</div>
<div class="r" style="left:227.2px;top:786.5px;width:848.8px;height:25.3px;background:#ffffff;"></div>
<div class="r" style="left:233.2px;top:791.1px;width:17.7px;height:15.6px;background:#fff;box-sizing:border-box;border:1.2px solid #b9b9b9;"></div>
<div class="t" style="left:369px;top:792.10px;font-size:13px;line-height:18px;color:#1a1a1a;font-weight:400;">16-01-2026</div>
<div class="t" style="left:510.5px;top:792.10px;font-size:13px;line-height:18px;color:#1a1a1a;font-weight:400;">(brak)</div>
<div class="t" style="left:653.5px;top:792.10px;font-size:13px;line-height:18px;color:#1a1a1a;font-weight:400;">(brak)</div>
<div class="t" style="left:797px;top:792.10px;font-size:13px;line-height:18px;color:#1a1a1a;font-weight:400;">16-01-2026</div>
<div class="t" style="left:890px;top:792.10px;font-size:13px;line-height:18px;color:#1a1a1a;font-weight:400;">PHU Chłodnik</div>
<div class="r" style="left:227.2px;top:811.8px;width:848.8px;height:25.3px;background:#f6f6f6;"></div>
<div class="r" style="left:233.2px;top:816.4px;width:17.7px;height:15.6px;background:#fff;box-sizing:border-box;border:1.2px solid #b9b9b9;"></div>
<div class="t" style="left:369px;top:817.40px;font-size:13px;line-height:18px;color:#1a1a1a;font-weight:400;">16-01-2026</div>
<div class="t" style="left:510.5px;top:817.40px;font-size:13px;line-height:18px;color:#1a1a1a;font-weight:400;">(brak)</div>
<div class="t" style="left:653.5px;top:817.40px;font-size:13px;line-height:18px;color:#1a1a1a;font-weight:400;">(brak)</div>
<div class="t" style="left:797px;top:817.40px;font-size:13px;line-height:18px;color:#1a1a1a;font-weight:400;">16-01-2026</div>
<div class="t" style="left:890px;top:817.40px;font-size:13px;line-height:18px;color:#1a1a1a;font-weight:400;">PHU Chłodnik</div>
<div class="r" style="left:227.2px;top:837.1px;width:848.8px;height:25.3px;background:#ffffff;"></div>
<div class="r" style="left:233.2px;top:841.7px;width:17.7px;height:15.6px;background:#fff;box-sizing:border-box;border:1.2px solid #b9b9b9;"></div>
<div class="t" style="left:369px;top:842.70px;font-size:13px;line-height:18px;color:#1a1a1a;font-weight:400;">19-01-2026</div>
<div class="t" style="left:510.5px;top:842.70px;font-size:13px;line-height:18px;color:#1a1a1a;font-weight:400;">(brak)</div>
<div class="t" style="left:653.5px;top:842.70px;font-size:13px;line-height:18px;color:#1a1a1a;font-weight:400;">(brak)</div>
<div class="t" style="left:797px;top:842.70px;font-size:13px;line-height:18px;color:#1a1a1a;font-weight:400;">19-01-2026</div>
<div class="t" style="left:890px;top:842.70px;font-size:13px;line-height:18px;color:#1a1a1a;font-weight:400;">PHU Chłodnik</div>
<div class="r" style="left:227.2px;top:862.4px;width:848.8px;height:25.3px;background:#f6f6f6;"></div>
<div class="r" style="left:233.2px;top:867.0px;width:17.7px;height:15.6px;background:#fff;box-sizing:border-box;border:1.2px solid #b9b9b9;"></div>
<div class="t" style="left:369px;top:868.00px;font-size:13px;line-height:18px;color:#1a1a1a;font-weight:400;">19-01-2026</div>
<div class="t" style="left:510.5px;top:868.00px;font-size:13px;line-height:18px;color:#1a1a1a;font-weight:400;">(brak)</div>
<div class="t" style="left:653.5px;top:868.00px;font-size:13px;line-height:18px;color:#1a1a1a;font-weight:400;">(brak)</div>
<div class="t" style="left:797px;top:868.00px;font-size:13px;line-height:18px;color:#1a1a1a;font-weight:400;">19-01-2026</div>
<div class="t" style="left:890px;top:868.00px;font-size:13px;line-height:18px;color:#1a1a1a;font-weight:400;">PHU Chłodnik</div>
<div class="r" style="left:258px;top:281px;width:1px;height:607px;background:repeating-linear-gradient(to bottom,#d8d8d8 0 1px,transparent 1px 3.1px);"></div>
<div class="r" style="left:259.4px;top:887.7px;width:816.6px;height:24.9px;background:#1e9fe0;"></div>
<div class="r" style="left:297.8px;top:887.7px;width:1px;height:24.9px;background:#5bbcec;"></div>
<div class="r" style="left:364.7px;top:887.7px;width:1px;height:24.9px;background:#5bbcec;"></div>
<div class="r" style="left:648.6px;top:887.7px;width:1px;height:24.9px;background:#5bbcec;"></div>
<div class="r" style="left:790px;top:887.7px;width:1px;height:24.9px;background:#5bbcec;"></div>
<div class="r" style="left:885px;top:887.7px;width:1px;height:24.9px;background:#5bbcec;"></div>
<div class="r" style="left:980.4px;top:887.7px;width:1px;height:24.9px;background:#5bbcec;"></div>
<svg class="r" style="left:259.4px;top:887.7px;" width="9" height="9" viewBox="0 0 9 9"><path d="M0 0 H8.4 L0 7.6 Z" fill="#4caf50"/></svg>
<div class="t" style="left:274.5px;top:893.30px;font-size:13.5px;line-height:18px;color:#0b6b1e;font-weight:400;">Z</div>
<svg class="r" style="left:304px;top:892.7px;" width="12" height="12" viewBox="0 0 12 12"><path d="M1.8 7 L4.3 9.6 L10 2.6" fill="none" stroke="#0a5e12" stroke-width="1.5"/></svg>
<div class="t" style="left:369px;top:893.30px;font-size:13px;line-height:18px;color:#0b6b1e;font-weight:400;">19-01-2026</div>
<div class="t" style="left:510.5px;top:893.30px;font-size:13px;line-height:18px;color:#0b6b1e;font-weight:400;">(brak)</div>
<div class="t" style="left:653.5px;top:893.30px;font-size:13px;line-height:18px;color:#0b6b1e;font-weight:400;">(brak)</div>
<div class="t" style="left:796px;top:893.30px;font-size:13px;line-height:18px;color:#0b6b1e;font-weight:400;">19-01-2026</div>
<div class="t" style="left:889.8px;top:893.30px;font-size:13px;line-height:18px;color:#0b6b1e;font-weight:400;">PHU Chłodnik</div>
<div class="r" style="left:227.2px;top:912.6px;width:848.8px;height:25.3px;background:#f6f6f6;"></div>
<div class="r" style="left:227.2px;top:937.9px;width:848.8px;height:25.4px;background:#ffffff;"></div>
<div class="r" style="left:1076px;top:280px;width:18px;height:683.3px;background:#ffffff;"></div>
<div class="r" style="left:1094px;top:252.5px;width:5.4px;height:711px;background:#eeeeee;"></div>
<svg class="r" style="left:1082px;top:951px;" width="12" height="8" viewBox="0 0 12 8"><path d="M1 1.5 L6 6 L11 1.5" fill="none" stroke="#aaa" stroke-width="1.3"/></svg>
<div class="r" style="left:227.6px;top:963.3px;width:872.4px;height:92.70000000000005px;background:#f7f7f7;"></div>
<div class="r" style="left:227.6px;top:970.5px;width:866.4px;height:1.4px;background:#e2e2e2;"></div>
<div class="t" style="left:262px;top:1006.70px;font-size:13px;line-height:18px;color:#222;font-weight:400;">Dokumentów: 1 z 25</div>
<div class="r" style="left:837px;top:997.2px;width:221.8px;height:34.6px;background:#1e9fe0;"></div>
<div class="t" style="left:837px;top:1004.5px;width:221.8px;text-align:center;font-size:15.2px;line-height:20px;color:#fff;font-weight:700;">WPROWADŹ DOKUMENTY</div>
<div class="r" style="left:1100px;top:83px;width:819px;height:973px;background:#f2f2f2;"></div>
<div class="r" style="left:1100.3px;top:84px;width:2px;height:972px;background:#1e9fe0;"></div>
<div class="r" style="left:1102.3px;top:84px;width:816.7px;height:48.5px;background:#1e9fe0;"></div>
<div class="t" style="left:1102px;top:96.8px;width:817px;text-align:center;font-size:13px;line-height:20px;color:#fff;font-weight:700;">Eksport.pdf</div>
<div class="r" style="left:1102.3px;top:132.5px;width:816.7px;height:43.3px;background:#f2f2f2;"></div>
<div class="r" style="left:1102.3px;top:175.3px;width:816.7px;height:1.2px;background:#dadada;"></div>
<svg class="r" style="left:1361px;top:146px;" width="18" height="18" viewBox="0 0 18 18"><path d="M4 5.5 A6.5 6.5 0 1 1 3.2 12" fill="none" stroke="#1a88c4" stroke-width="2.2"/><path d="M1 2 L1.5 8.5 L7.5 7 Z" fill="#1a88c4"/></svg>
<svg class="r" style="left:1395px;top:146px;" width="18" height="18" viewBox="0 0 18 18"><path d="M14 5.5 A6.5 6.5 0 1 0 14.8 12" fill="none" stroke="#1a88c4" stroke-width="2.2"/><path d="M17 2 L16.5 8.5 L10.5 7 Z" fill="#1a88c4"/></svg>
<svg class="r" style="left:1427px;top:146px;" width="18" height="18" viewBox="0 0 18 18"><rect x="8" y="0" width="2.2" height="18" fill="#1a88c4"/><path d="M6 4 L0.5 9 L6 14 Z M12.2 4 L17.7 9 L12.2 14 Z" fill="#1a88c4"/></svg>
<svg class="r" style="left:1510px;top:146px;" width="18" height="18" viewBox="0 0 18 18"><circle cx="9" cy="9" r="7" fill="none" stroke="#1a88c4" stroke-width="1.8"/><path d="M9 5 V13 M5 9 H13" stroke="#1a88c4" stroke-width="2"/></svg>
<svg class="r" style="left:1543px;top:146px;" width="18" height="18" viewBox="0 0 18 18"><circle cx="9" cy="9" r="7" fill="none" stroke="#1a88c4" stroke-width="1.8"/><path d="M5 9 H13" stroke="#1a88c4" stroke-width="2"/></svg>
<svg class="r" style="left:1576px;top:146px;" width="18" height="18" viewBox="0 0 18 18"><path d="M14.5 6 A6.5 6.5 0 0 0 3 6" fill="none" stroke="#1a88c4" stroke-width="2.2"/><path d="M3.5 12 A6.5 6.5 0 0 0 15 12" fill="none" stroke="#1a88c4" stroke-width="2.2"/><path d="M17 2 L16.5 8.5 L11 6.5 Z M1 16 L1.5 9.5 L7 11.5 Z" fill="#1a88c4"/></svg>
<svg class="r" style="left:1609px;top:146px;" width="18" height="18" viewBox="0 0 18 18"><path d="M1.5 17.5 V3 Q1.5 1.5 3 1.5 H15 Q16.5 1.5 16.5 3 V17.5" fill="none" stroke="#1a88c4" stroke-width="1.5"/><path d="M9 4.5 V14 M6 7.5 L9 4 L12 7.5 M6 11 L9 14.5 L12 11" fill="none" stroke="#1a88c4" stroke-width="2"/></svg>
<div class="r" style="left:1640.8px;top:145px;width:20px;height:20px;background:#c6dfea;"></div>
<svg class="r" style="left:1642px;top:146px;" width="18" height="18" viewBox="0 0 18 18"><path d="M1.5 17.5 V3 Q1.5 1.5 3 1.5 H15 Q16.5 1.5 16.5 3 V17.5" fill="none" stroke="#555" stroke-width="1.5"/><path d="M4 9.5 H14 M7 6.5 L3.8 9.5 L7 12.5 M11 6.5 L14.2 9.5 L11 12.5" fill="none" stroke="#444" stroke-width="1.8"/></svg>
<div class="r" style="left:1140.5px;top:176.5px;width:778.5px;height:837.5px;background:#ffffff;"></div>
<div class="r" style="left:1140px;top:176.5px;width:1px;height:879.5px;background:#dddddd;"></div>
<div class="r" style="left:1141px;top:1014px;width:778px;height:42px;background:#f2f2f2;"></div>
<svg class="r" style="left:1521px;top:1026.5px;" width="18" height="18" viewBox="0 0 18 18"><circle cx="7" cy="7" r="5" fill="none" stroke="#1a88c4" stroke-width="2.3"/><path d="M10.5 10.5 L15.5 15.5" stroke="#1a88c4" stroke-width="2.8" stroke-linecap="round"/></svg>
<div class="t" style="left:1901px;top:1042.80px;font-size:10.5px;line-height:12px;color:#222;font-weight:400;letter-spacing:0.9px;">+/-</div>
<div class="t" style="left:1198px;top:203.80px;font-size:12.8px;line-height:17px;color:#111;font-weight:400;">PHU Chłodnik</div>
<div class="t" style="left:1198px;top:218.80px;font-size:12.8px;line-height:17px;color:#111;font-weight:400;">Bławatkowa 25/3, 54-445 Wrocław</div>
<div class="t" style="left:1198px;top:233.70px;font-size:12.8px;line-height:17px;color:#111;font-weight:400;">Tel.: 354-65-89, NIP:</div>
<div class="r" style="left:1322px;top:237px;width:76px;height:11px;background:#d8d8d8;filter:blur(2.5px);"></div>
<div class="t" style="left:1198px;top:248.20px;font-size:12.8px;line-height:17px;color:#111;font-weight:400;">Bank Testowy,</div>
<div class="r" style="left:1200px;top:267px;width:196px;height:12px;background:#dcdcdc;filter:blur(2.5px);"></div>
<div class="r" style="left:1647.3px;top:196px;width:246.20000000000005px;height:1.5px;background:#222;"></div>
<div class="r" style="left:1647.3px;top:197.5px;width:246.20000000000005px;height:15.699999999999989px;background:#d9d9d9;"></div>
<div class="t" style="left:1647.3px;top:197.10px;width:246.20000000000005px;text-align:center;font-size:13px;line-height:17px;color:#111;font-weight:400;">Miejsce wystawienia:</div>
<div class="t" style="left:1647.3px;top:215.70px;width:246.20000000000005px;text-align:center;font-size:13px;line-height:17px;color:#111;font-weight:400;">Wrocław</div>
<div class="r" style="left:1647.3px;top:235.8px;width:246.20000000000005px;height:1.5px;background:#222;"></div>
<div class="r" style="left:1647.3px;top:237.3px;width:246.20000000000005px;height:16.399999999999977px;background:#d9d9d9;"></div>
<div class="t" style="left:1647.3px;top:237.25px;width:246.20000000000005px;text-align:center;font-size:13px;line-height:17px;color:#111;font-weight:400;">Data zakończenia dostawy/usług</div>
<div class="t" style="left:1647.3px;top:256.20px;width:246.20000000000005px;text-align:center;font-size:13px;line-height:17px;color:#111;font-weight:400;">19.01.2026</div>
<div class="r" style="left:1647.3px;top:280.2px;width:246.20000000000005px;height:1.5px;background:#222;"></div>
<div class="r" style="left:1647.3px;top:281.7px;width:246.20000000000005px;height:16.30000000000001px;background:#d9d9d9;"></div>
<div class="t" style="left:1647.3px;top:281.60px;width:246.20000000000005px;text-align:center;font-size:13px;line-height:17px;color:#111;font-weight:400;">Data wystawienia:</div>
<div class="t" style="left:1647.3px;top:300.50px;width:246.20000000000005px;text-align:center;font-size:13px;line-height:17px;color:#111;font-weight:400;">19.01.2026</div>
<div class="r" style="left:1647.3px;top:319.3px;width:246.20000000000005px;height:1.2px;background:#222;"></div>
<div class="r" style="left:1190.7px;top:356.5px;width:330.0999999999999px;height:1.6px;background:#222;"></div>
<div class="r" style="left:1190.7px;top:358px;width:330.0999999999999px;height:16.5px;background:#d9d9d9;"></div>
<div class="t" style="left:1190.7px;top:358.00px;width:330.0999999999999px;text-align:center;font-size:13px;line-height:17px;color:#111;font-weight:400;">Sprzedawca:</div>
<div class="t" style="left:1192.2px;top:373.30px;font-size:13px;line-height:17px;color:#111;font-weight:400;">PHU Chłodnik</div>
<div class="t" style="left:1192.2px;top:390.40px;font-size:13px;line-height:17px;color:#111;font-weight:400;">Bławatkowa 25/3</div>
<div class="t" style="left:1192.2px;top:405.00px;font-size:13px;line-height:17px;color:#111;font-weight:400;">54-445 Wrocław</div>
<div class="t" style="left:1192.2px;top:419.20px;font-size:13px;line-height:17px;color:#111;font-weight:400;">NIP:</div>
<div class="r" style="left:1224px;top:422px;width:72px;height:11px;background:#d6d6d6;filter:blur(2.5px);"></div>
<div class="r" style="left:1190.7px;top:436.5px;width:330.0999999999999px;height:1.2px;background:#222;"></div>
<div class="r" style="left:1565px;top:356.5px;width:329.20000000000005px;height:1.6px;background:#222;"></div>
<div class="r" style="left:1565px;top:358px;width:329.20000000000005px;height:16.5px;background:#d9d9d9;"></div>
<div class="t" style="left:1565px;top:358.00px;width:329.20000000000005px;text-align:center;font-size:13px;line-height:17px;color:#111;font-weight:400;">Nabywca:</div>
<div class="t" style="left:1566.5px;top:373.30px;font-size:13px;line-height:17px;color:#111;font-weight:400;">AD-MAR s.c.</div>
<div class="t" style="left:1566.5px;top:390.40px;font-size:13px;line-height:17px;color:#111;font-weight:400;">Romanowskiego 23</div>
<div class="t" style="left:1566.5px;top:405.00px;font-size:13px;line-height:17px;color:#111;font-weight:400;">46-020 Bierkowice</div>
<div class="t" style="left:1566.5px;top:419.20px;font-size:13px;line-height:17px;color:#111;font-weight:400;">NIP:</div>
<div class="r" style="left:1598px;top:422px;width:72px;height:11px;background:#d6d6d6;filter:blur(2.5px);"></div>
<div class="r" style="left:1565px;top:436.5px;width:329.20000000000005px;height:1.2px;background:#222;"></div>
<div class="t" style="left:1400px;top:454.10px;width:290px;text-align:center;font-size:19.2px;line-height:25px;color:#111;font-weight:400;">Faktura VAT&nbsp; 1/2026 oryginał</div>
<div class="r" style="left:1190.7px;top:496.3px;width:701.5px;height:40.19999999999999px;background:#d9d9d9;"></div>
<div class="r" style="left:1190.7px;top:495.8px;width:701.5px;height:1.1px;background:#222;"></div>
<div class="r" style="left:1190.7px;top:536.0px;width:701.5px;height:1.1px;background:#222;"></div>
<div class="r" style="left:1190.7px;top:565.5px;width:701.5px;height:1.1px;background:#222;"></div>
<div class="r" style="left:1190.7px;top:585.5px;width:701.5px;height:1.1px;background:#222;"></div>
<div class="r" style="left:1190.2px;top:496.3px;width:1.1px;height:89.69999999999999px;background:#222;"></div>
<div class="r" style="left:1216.5px;top:496.3px;width:1.1px;height:89.69999999999999px;background:#222;"></div>
<div class="r" style="left:1396.1px;top:496.3px;width:1.1px;height:89.69999999999999px;background:#222;"></div>
<div class="r" style="left:1481.7px;top:496.3px;width:1.1px;height:89.69999999999999px;background:#222;"></div>
<div class="r" style="left:1542.6px;top:496.3px;width:1.1px;height:89.69999999999999px;background:#222;"></div>
<div class="r" style="left:1569.0px;top:496.3px;width:1.1px;height:89.69999999999999px;background:#222;"></div>
<div class="r" style="left:1640.0px;top:496.3px;width:1.1px;height:89.69999999999999px;background:#222;"></div>
<div class="r" style="left:1669.7px;top:496.3px;width:1.1px;height:89.69999999999999px;background:#222;"></div>
<div class="r" style="left:1744.8px;top:496.3px;width:1.1px;height:89.69999999999999px;background:#222;"></div>
<div class="r" style="left:1815.8px;top:496.3px;width:1.1px;height:89.69999999999999px;background:#222;"></div>
<div class="r" style="left:1891.7px;top:496.3px;width:1.1px;height:89.69999999999999px;background:#222;"></div>
<div class="r" style="left:1190.7px;top:496.0px;width:701.5px;height:1.5px;background:#222;"></div>
<div class="r" style="left:1190.7px;top:585.7px;width:701.5px;height:1.5px;background:#222;"></div>
<div class="t" style="left:1190.7px;top:496.50px;width:26.299999999999955px;text-align:center;font-size:11px;line-height:14px;color:#111;font-weight:400;">Lp</div>
<div class="t" style="left:1217px;top:496.50px;width:179.5999999999999px;text-align:center;font-size:11px;line-height:14px;color:#111;font-weight:400;">Nazwa</div>
<div class="t" style="left:1396.6px;top:496.50px;width:85.60000000000014px;text-align:center;font-size:11px;line-height:14px;color:#111;font-weight:400;">Kod CN/PKWiU</div>
<div class="t" style="left:1482.2px;top:496.50px;width:60.899999999999864px;text-align:center;font-size:11px;line-height:14px;color:#111;font-weight:400;">Ilość</div>
<div class="t" style="left:1543.1px;top:496.50px;width:26.40000000000009px;text-align:center;font-size:11px;line-height:14px;color:#111;font-weight:400;">j.m.</div>
<div class="t" style="left:1569.5px;top:496.50px;width:71.0px;text-align:center;font-size:11px;line-height:14px;color:#111;font-weight:400;">Cena</div>
<div class="t" style="left:1569.5px;top:509.30px;width:71.0px;text-align:center;font-size:11px;line-height:14px;color:#111;font-weight:400;">jednostkowa</div>
<div class="t" style="left:1569.5px;top:522.10px;width:71.0px;text-align:center;font-size:11px;line-height:14px;color:#111;font-weight:400;">netto</div>
<div class="t" style="left:1640.5px;top:496.50px;width:29.700000000000045px;text-align:center;font-size:11px;line-height:14px;color:#111;font-weight:400;">VAT</div>
<div class="t" style="left:1640.5px;top:509.30px;width:29.700000000000045px;text-align:center;font-size:11px;line-height:14px;color:#111;font-weight:400;">[%]</div>
<div class="t" style="left:1670.2px;top:496.50px;width:75.09999999999991px;text-align:center;font-size:11px;line-height:14px;color:#111;font-weight:400;">Wartość netto</div>
<div class="t" style="left:1745.3px;top:496.50px;width:71.0px;text-align:center;font-size:11px;line-height:14px;color:#111;font-weight:400;">Kwota VAT</div>
<div class="t" style="left:1816.3px;top:496.50px;width:75.90000000000009px;text-align:center;font-size:11px;line-height:14px;color:#111;font-weight:400;">Wartość brutto</div>
<div class="t" style="left:1190.7px;top:538.50px;width:26.299999999999955px;text-align:center;font-size:11px;line-height:14px;color:#111;font-weight:400;">1</div>
<div class="t" style="left:1219px;top:538.50px;font-size:11px;line-height:14px;color:#111;font-weight:400;">Balsam do ciała intensywnie</div>
<div class="t" style="left:1219px;top:551.30px;font-size:11px;line-height:14px;color:#111;font-weight:400;">regenerujący 200 ml</div>
<div class="t" style="left:1398.6px;top:538.50px;font-size:11px;line-height:14px;color:#111;font-weight:400;">3304 99 00</div>
<div class="t" style="left:1241.6px;top:538.50px;width:300px;text-align:right;font-size:11px;line-height:14px;color:#111;font-weight:400;">3,000</div>
<div class="t" style="left:1547.1px;top:538.50px;font-size:11px;line-height:14px;color:#111;font-weight:400;">szt.</div>
<div class="t" style="left:1339.0px;top:538.50px;width:300px;text-align:right;font-size:11px;line-height:14px;color:#111;font-weight:400;">24,15</div>
<div class="t" style="left:1640.5px;top:538.50px;width:29.700000000000045px;text-align:center;font-size:11px;line-height:14px;color:#111;font-weight:400;">23</div>
<div class="t" style="left:1443.8px;top:538.50px;width:300px;text-align:right;font-size:11px;line-height:14px;color:#111;font-weight:400;">72,45</div>
<div class="t" style="left:1514.8px;top:538.50px;width:300px;text-align:right;font-size:11px;line-height:14px;color:#111;font-weight:400;">16,66</div>
<div class="t" style="left:1590.7px;top:538.50px;width:300px;text-align:right;font-size:11px;line-height:14px;color:#111;font-weight:400;">89,11</div>
<div class="t" style="left:1190.7px;top:568.50px;width:26.299999999999955px;text-align:center;font-size:11px;line-height:14px;color:#111;font-weight:400;">2</div>
<div class="t" style="left:1219px;top:568.50px;font-size:11px;line-height:14px;color:#111;font-weight:400;">So perfumy 20ml</div>
<div class="t" style="left:1398.6px;top:568.50px;font-size:11px;line-height:14px;color:#111;font-weight:400;">3303 00 10</div>
<div class="t" style="left:1241.6px;top:568.50px;width:300px;text-align:right;font-size:11px;line-height:14px;color:#111;font-weight:400;">2,000</div>
<div class="t" style="left:1547.1px;top:568.50px;font-size:11px;line-height:14px;color:#111;font-weight:400;">szt.</div>
<div class="t" style="left:1339.0px;top:568.50px;width:300px;text-align:right;font-size:11px;line-height:14px;color:#111;font-weight:400;">270,00</div>
<div class="t" style="left:1640.5px;top:568.50px;width:29.700000000000045px;text-align:center;font-size:11px;line-height:14px;color:#111;font-weight:400;">8</div>
<div class="t" style="left:1443.8px;top:568.50px;width:300px;text-align:right;font-size:11px;line-height:14px;color:#111;font-weight:400;">540,00</div>
<div class="t" style="left:1514.8px;top:568.50px;width:300px;text-align:right;font-size:11px;line-height:14px;color:#111;font-weight:400;">43,20</div>
<div class="t" style="left:1590.7px;top:568.50px;width:300px;text-align:right;font-size:11px;line-height:14px;color:#111;font-weight:400;">583,20</div>
<div class="r" style="left:1452.6px;top:599.3px;width:439.20000000000005px;height:19.100000000000023px;background:#d9d9d9;"></div>
<div class="r" style="left:1452.6px;top:598.8px;width:439.20000000000005px;height:1.1px;background:#222;"></div>
<div class="r" style="left:1452.6px;top:617.9px;width:439.20000000000005px;height:1.1px;background:#222;"></div>
<div class="r" style="left:1452.6px;top:637.8px;width:439.20000000000005px;height:1.1px;background:#222;"></div>
<div class="r" style="left:1452.6px;top:657.7px;width:439.20000000000005px;height:1.1px;background:#222;"></div>
<div class="r" style="left:1452.1px;top:599.3px;width:1.1px;height:58.90000000000009px;background:#222;"></div>
<div class="r" style="left:1655.0px;top:599.3px;width:1.1px;height:58.90000000000009px;background:#222;"></div>
<div class="r" style="left:1734.2px;top:599.3px;width:1.1px;height:58.90000000000009px;background:#222;"></div>
<div class="r" style="left:1812.2px;top:599.3px;width:1.1px;height:58.90000000000009px;background:#222;"></div>
<div class="r" style="left:1891.3px;top:599.3px;width:1.1px;height:58.90000000000009px;background:#222;"></div>
<div class="t" style="left:1452.6px;top:601.50px;width:202.9000000000001px;text-align:center;font-size:11px;line-height:14px;color:#111;font-weight:400;">według stawki VAT</div>
<div class="t" style="left:1655.5px;top:601.50px;width:79.20000000000005px;text-align:center;font-size:11px;line-height:14px;color:#111;font-weight:400;">wartość netto</div>
<div class="t" style="left:1734.7px;top:601.50px;width:78.0px;text-align:center;font-size:11px;line-height:14px;color:#111;font-weight:400;">kwota VAT</div>
<div class="t" style="left:1812.7px;top:601.50px;width:79.09999999999991px;text-align:center;font-size:11px;line-height:14px;color:#111;font-weight:400;">wartość brutto</div>
<div class="t" style="left:1455.1px;top:620.50px;font-size:11px;line-height:14px;color:#111;font-weight:400;">Podstawowy podatek VAT 23%</div>
<div class="t" style="left:1432.7px;top:620.50px;width:300px;text-align:right;font-size:11px;line-height:14px;color:#111;font-weight:400;">72,45</div>
<div class="t" style="left:1510.7px;top:620.50px;width:300px;text-align:right;font-size:11px;line-height:14px;color:#111;font-weight:400;">16,66</div>
<div class="t" style="left:1589.8px;top:620.50px;width:300px;text-align:right;font-size:11px;line-height:14px;color:#111;font-weight:400;">89,11</div>
<div class="t" style="left:1455.1px;top:640.30px;font-size:11px;line-height:14px;color:#111;font-weight:400;">Podatek VAT 8%</div>
<div class="t" style="left:1432.7px;top:640.30px;width:300px;text-align:right;font-size:11px;line-height:14px;color:#111;font-weight:400;">540,00</div>
<div class="t" style="left:1510.7px;top:640.30px;width:300px;text-align:right;font-size:11px;line-height:14px;color:#111;font-weight:400;">43,20</div>
<div class="t" style="left:1589.8px;top:640.30px;width:300px;text-align:right;font-size:11px;line-height:14px;color:#111;font-weight:400;">583,20</div>
<div class="t" style="left:1577px;top:660.10px;font-size:11px;line-height:14px;color:#111;font-weight:400;">Razem:</div>
<div class="t" style="left:1432.7px;top:660.10px;width:300px;text-align:right;font-size:11px;line-height:14px;color:#111;font-weight:400;">612,45</div>
<div class="t" style="left:1510.7px;top:660.10px;width:300px;text-align:right;font-size:11px;line-height:14px;color:#111;font-weight:400;">59,86</div>
<div class="t" style="left:1589.8px;top:660.10px;width:300px;text-align:right;font-size:11px;line-height:14px;color:#111;font-weight:400;">672,31</div>
<div class="t" style="left:1192px;top:683.00px;font-size:13px;line-height:17px;color:#111;font-weight:700;">Zapłacono gotówką:</div>
<div class="t" style="left:1345px;top:683.00px;font-size:13px;line-height:17px;color:#111;font-weight:400;">672,31</div>
<div class="r" style="left:1523.6px;top:685px;width:369.4000000000001px;height:2.2px;background:#111;"></div>
<div class="r" style="left:1523.6px;top:687.2px;width:369.4000000000001px;height:22.6px;background:#d9d9d9;"></div>
<div class="t" style="left:1525px;top:687.00px;font-size:15.6px;line-height:20px;color:#111;font-weight:700;">Razem do zapłaty:</div>
<div class="t" style="left:1591px;top:687.00px;width:300px;text-align:right;font-size:15.6px;line-height:20px;color:#111;font-weight:700;">672,31</div>
<div class="t" style="left:1523.6px;top:710.50px;font-size:13px;line-height:17px;color:#111;font-weight:700;">Słownie:</div>
<div class="t" style="left:1594.7px;top:710.50px;font-size:13.2px;line-height:17px;color:#111;font-weight:400;">sześćset siedemdziesiąt dwa&nbsp; PLN 31/100</div>
<div class="r" style="left:1523.6px;top:734.3px;width:369.4000000000001px;height:1.3px;background:#222;"></div>
<div class="r" style="left:1192px;top:766.2px;width:310px;height:100.7px;background:transparent;box-sizing:border-box;border:1.2px solid #444;"></div>
<div class="r" style="left:1195px;top:769.8px;width:304px;height:16.2px;background:#d9d9d9;"></div>
<div class="t" style="left:1192px;top:769.30px;width:310px;text-align:center;font-size:13px;line-height:17px;color:#111;font-weight:700;">Wystawił(a):</div>
<div class="t" style="left:1192px;top:787.70px;width:310px;text-align:center;font-size:13px;line-height:17px;color:#111;font-weight:400;">Szef</div>
<div class="t" style="left:1152px;top:866.00px;width:390px;text-align:center;font-size:9.2px;line-height:12px;color:#111;font-weight:400;">Podpis osoby upoważnionej do wystawienia faktury VAT</div>
<div class="r" style="left:1585.3px;top:766.2px;width:310.10000000000014px;height:100.7px;background:transparent;box-sizing:border-box;border:1.2px solid #444;"></div>
<div class="r" style="left:1588.3px;top:769.8px;width:304.10000000000014px;height:16.2px;background:#d9d9d9;"></div>
<div class="t" style="left:1585.3px;top:769.30px;width:310.10000000000014px;text-align:center;font-size:13px;line-height:17px;color:#111;font-weight:700;">Odebrał(a):</div>
<div class="t" style="left:1585.3px;top:787.70px;width:310.10000000000014px;text-align:center;font-size:13px;line-height:17px;color:#111;font-weight:400;">Janina Herbuska</div>
<div class="t" style="left:1545.3px;top:866.00px;width:390.10000000000014px;text-align:center;font-size:9.2px;line-height:12px;color:#111;font-weight:400;">Podpis osoby upoważnionej do odbioru faktury VAT</div>
<div class="r" style="left:695px;top:168px;width:440.5px;height:727.3px;background:#fff;box-sizing:border-box;border:1px solid #1e9fe0;box-shadow:3px 3px 4px rgba(0,0,0,0.35);"></div>
<div class="r" style="left:696px;top:676px;width:437.4000000000001px;height:24px;background:#cfe8f5;"></div>
<div class="t" style="left:733.75px;top:175.30px;font-size:13.2px;line-height:18px;color:#242424;font-weight:400;">KPiR</div>
<svg class="r" style="left:1112px;top:178.1px;" width="8" height="10" viewBox="0 0 8 10"><path d="M2.2 1.3 L5.6 4.8 L2.2 8.3" fill="none" stroke="#222" stroke-width="1.6"/></svg>
<svg class="r" style="left:708.6px;top:174.9px;" width="15.4" height="14" viewBox="0 0 15.4 14"><path d="M7.7 0 V14 M0 7 H15.4" stroke="#0f7f16" stroke-width="3.3"/></svg>
<div class="t" style="left:733.75px;top:199.00px;font-size:13.2px;line-height:18px;color:#242424;font-weight:400;">Sprzedaż VAT</div>
<svg class="r" style="left:1112px;top:201.8px;" width="8" height="10" viewBox="0 0 8 10"><path d="M2.2 1.3 L5.6 4.8 L2.2 8.3" fill="none" stroke="#222" stroke-width="1.6"/></svg>
<svg class="r" style="left:708.6px;top:198.60000000000002px;" width="15.4" height="14" viewBox="0 0 15.4 14"><path d="M7.7 0 V14 M0 7 H15.4" stroke="#0f7f16" stroke-width="3.3"/></svg>
<div class="t" style="left:733.75px;top:223.00px;font-size:13.2px;line-height:18px;color:#242424;font-weight:400;">Sprzedaż VAT OSS</div>
<svg class="r" style="left:1112px;top:225.8px;" width="8" height="10" viewBox="0 0 8 10"><path d="M2.2 1.3 L5.6 4.8 L2.2 8.3" fill="none" stroke="#222" stroke-width="1.6"/></svg>
<svg class="r" style="left:708.6px;top:222.60000000000002px;" width="15.4" height="14" viewBox="0 0 15.4 14"><path d="M7.7 0 V14 M0 7 H15.4" stroke="#0f7f16" stroke-width="3.3"/></svg>
<div class="t" style="left:733.75px;top:247.40px;font-size:13.2px;line-height:18px;color:#242424;font-weight:400;">Zakup VAT</div>
<svg class="r" style="left:1112px;top:250.2px;" width="8" height="10" viewBox="0 0 8 10"><path d="M2.2 1.3 L5.6 4.8 L2.2 8.3" fill="none" stroke="#222" stroke-width="1.6"/></svg>
<svg class="r" style="left:708.6px;top:247.0px;" width="15.4" height="14" viewBox="0 0 15.4 14"><path d="M7.7 0 V14 M0 7 H15.4" stroke="#0f7f16" stroke-width="3.3"/></svg>
<div class="t" style="left:733.75px;top:272.10px;font-size:13.2px;line-height:18px;color:#242424;font-weight:400;">Powiąż z</div>
<svg class="r" style="left:1112px;top:274.9px;" width="8" height="10" viewBox="0 0 8 10"><path d="M2.2 1.3 L5.6 4.8 L2.2 8.3" fill="none" stroke="#222" stroke-width="1.6"/></svg>
<div class="r" style="left:735.6px;top:294.6px;width:387.19999999999993px;height:1.3px;background:#e4e4e4;"></div>
<div class="t" style="left:733.75px;top:303.20px;font-size:13.2px;line-height:18px;color:#242424;font-weight:400;">Dekretuj</div>
<div class="t" style="left:1037.4px;top:303.20px;font-size:13.2px;line-height:18px;color:#242424;font-weight:400;">Ctrl+Shift+R</div>
<div class="t" style="left:733.75px;top:328.10px;font-size:13.2px;line-height:18px;color:#242424;font-weight:400;">Dekretuj automatycznie</div>
<svg class="r" style="left:1112px;top:330.9px;" width="8" height="10" viewBox="0 0 8 10"><path d="M2.2 1.3 L5.6 4.8 L2.2 8.3" fill="none" stroke="#222" stroke-width="1.6"/></svg>
<div class="t" style="left:733.75px;top:352.00px;font-size:13.2px;line-height:18px;color:#242424;font-weight:400;">Wycofaj dekretację</div>
<div class="t" style="left:1037.4px;top:352.00px;font-size:13.2px;line-height:18px;color:#242424;font-weight:400;">Ctrl+Delete</div>
<div class="r" style="left:735.6px;top:374.7px;width:387.19999999999993px;height:1.3px;background:#e4e4e4;"></div>
<div class="t" style="left:733.75px;top:383.90px;font-size:13.2px;line-height:18px;color:#242424;font-weight:400;">Przypisz schemat dekretacji</div>
<div class="t" style="left:733.75px;top:408.00px;font-size:13.2px;line-height:18px;color:#242424;font-weight:400;">Automatyczny wybór schematu dekretacji</div>
<div class="r" style="left:735.6px;top:430.7px;width:387.19999999999993px;height:1.3px;background:#e4e4e4;"></div>
<div class="t" style="left:733.75px;top:440.00px;font-size:13.2px;line-height:18px;color:#242424;font-weight:400;">Usuń</div>
<div class="t" style="left:1037.4px;top:440.00px;font-size:13.2px;line-height:18px;color:#242424;font-weight:400;">Delete</div>
<svg class="r" style="left:709.5px;top:439.8px;" width="13" height="16" viewBox="0 0 13 16"><rect x="0.5" y="2" width="12" height="2.2" fill="#1a88c4"/><rect x="4" y="0" width="5" height="2.5" fill="#1a88c4"/><path d="M1.8 5 H11.2 L10.6 15.5 H2.4 Z" fill="#1a88c4"/><path d="M4.6 7 V13.5 M8.4 7 V13.5" stroke="#fff" stroke-width="1.2"/></svg>
<div class="t" style="left:733.75px;top:464.30px;font-size:13.2px;line-height:18px;color:#242424;font-weight:400;">Przywróć do obiegu</div>
<div class="t" style="left:1037.4px;top:464.30px;font-size:13.2px;line-height:18px;color:#242424;font-weight:400;">Ctrl+B</div>
<div class="r" style="left:735.6px;top:486.4px;width:387.19999999999993px;height:1.3px;background:#e4e4e4;"></div>
<div class="t" style="left:733.75px;top:496.00px;font-size:13.2px;line-height:18px;color:#242424;font-weight:400;">Zmień status przetworzenia</div>
<svg class="r" style="left:1112px;top:498.8px;" width="8" height="10" viewBox="0 0 8 10"><path d="M2.2 1.3 L5.6 4.8 L2.2 8.3" fill="none" stroke="#222" stroke-width="1.6"/></svg>
<div class="t" style="left:733.75px;top:519.80px;font-size:13.2px;line-height:18px;color:#242424;font-weight:400;">Nie podlega księgowaniu</div>
<div class="t" style="left:1037.4px;top:519.80px;font-size:13.2px;line-height:18px;color:#242424;font-weight:400;">Ctrl+N</div>
<div class="t" style="left:733.75px;top:544.10px;font-size:13.2px;line-height:18px;color:#242424;font-weight:400;">Cofnij - Nie podlega księgowaniu</div>
<div class="r" style="left:735.6px;top:567.0px;width:387.19999999999993px;height:1.3px;background:#e4e4e4;"></div>
<div class="t" style="left:733.75px;top:576.20px;font-size:13.2px;line-height:18px;color:#242424;font-weight:400;">Nadaj zbiorczo grupę</div>
<div class="t" style="left:1037.4px;top:576.20px;font-size:13.2px;line-height:18px;color:#242424;font-weight:400;">Ctrl+Alt+K</div>
<div class="t" style="left:733.75px;top:600.30px;font-size:13.2px;line-height:18px;color:#242424;font-weight:400;">Nadaj zbiorczo typ dokumentu do dekretacji</div>
<div class="t" style="left:1037.4px;top:600.30px;font-size:13.2px;line-height:18px;color:#242424;font-weight:400;">Ctrl+Alt+T</div>
<div class="t" style="left:733.75px;top:625.20px;font-size:13.2px;line-height:18px;color:#242424;font-weight:400;">Nadaj zbiorczo etykiety księgowe</div>
<div class="t" style="left:1037.4px;top:625.20px;font-size:13.2px;line-height:18px;color:#242424;font-weight:400;">Ctrl+Alt+E</div>
<div class="r" style="left:735.6px;top:647.6px;width:387.19999999999993px;height:1.3px;background:#e4e4e4;"></div>
<div class="t" style="left:733.75px;top:656.80px;font-size:13.2px;line-height:18px;color:#242424;font-weight:400;"><b>Otwórz</b></div>
<div class="t" style="left:1037.4px;top:656.80px;font-size:13.2px;line-height:18px;color:#242424;font-weight:400;"><b>F3</b></div>
<svg class="r" style="left:708px;top:655.1px;" width="17" height="17" viewBox="0 0 17 17"><circle cx="7" cy="7" r="5" fill="none" stroke="#1a88c4" stroke-width="2.3"/><path d="M10.5 10.5 L15 15" stroke="#1a88c4" stroke-width="2.8" stroke-linecap="round"/></svg>
<div class="t" style="left:733.75px;top:681.20px;font-size:13.2px;line-height:18px;color:#242424;font-weight:400;">Pokaż zaksięgowane dokumenty</div>
<div class="t" style="left:1037.4px;top:681.20px;font-size:13.2px;line-height:18px;color:#242424;font-weight:400;">Ctrl+Z</div>
<div class="r" style="left:735.6px;top:703.7px;width:387.19999999999993px;height:1.3px;background:#e4e4e4;"></div>
<div class="t" style="left:733.75px;top:713.30px;font-size:13.2px;line-height:18px;color:#242424;font-weight:400;">Dokumenty powiązane</div>
<div class="t" style="left:1037.4px;top:713.30px;font-size:13.2px;line-height:18px;color:#242424;font-weight:400;">Ctrl+E</div>
<div class="t" style="left:733.75px;top:737.10px;font-size:13.2px;line-height:18px;color:#242424;font-weight:400;">Drukuj</div>
<div class="t" style="left:1037.4px;top:737.10px;font-size:13.2px;line-height:18px;color:#242424;font-weight:400;">Ctrl+P</div>
<svg class="r" style="left:707.5px;top:736.4px;" width="17" height="17" viewBox="0 0 17 17"><rect x="4" y="0.8" width="9" height="4" fill="none" stroke="#1a88c4" stroke-width="1.5"/><rect x="0.5" y="5" width="16" height="8" rx="2" fill="#1a88c4"/><rect x="4" y="10" width="9" height="6.2" fill="#fff" stroke="#1a88c4" stroke-width="1.5"/><path d="M6 12.5 H11" stroke="#1a88c4" stroke-width="1"/></svg>
<div class="t" style="left:733.75px;top:761.20px;font-size:13.2px;line-height:18px;color:#242424;font-weight:400;">Wyślij e-mailem</div>
<div class="t" style="left:733.75px;top:785.20px;font-size:13.2px;line-height:18px;color:#242424;font-weight:400;">Zapisz</div>
<svg class="r" style="left:1112px;top:788.0px;" width="8" height="10" viewBox="0 0 8 10"><path d="M2.2 1.3 L5.6 4.8 L2.2 8.3" fill="none" stroke="#222" stroke-width="1.6"/></svg>
<div class="r" style="left:735.6px;top:807.7px;width:387.19999999999993px;height:1.3px;background:#e4e4e4;"></div>
<div class="t" style="left:733.75px;top:817.20px;font-size:13.2px;line-height:18px;color:#242424;font-weight:400;">Podgląd w oknie</div>
<div class="t" style="left:1037.4px;top:817.20px;font-size:13.2px;line-height:18px;color:#242424;font-weight:400;">F9</div>
<div class="r" style="left:735.6px;top:839.6px;width:387.19999999999993px;height:1.3px;background:#e4e4e4;"></div>
<div class="t" style="left:733.75px;top:848.80px;font-size:13.2px;line-height:18px;color:#242424;font-weight:400;">Konfiguracja widoku</div>
<div class="t" style="left:1037.4px;top:848.80px;font-size:13.2px;line-height:18px;color:#242424;font-weight:400;">Ctrl+Shift+L</div>
<div class="t" style="left:733.75px;top:873.10px;font-size:13.2px;line-height:18px;color:#242424;font-weight:400;">Operacje na liście</div>
<svg class="r" style="left:1112px;top:875.9px;" width="8" height="10" viewBox="0 0 8 10"><path d="M2.2 1.3 L5.6 4.8 L2.2 8.3" fill="none" stroke="#222" stroke-width="1.6"/></svg>
<div class="r" style="left:221.2px;top:880.8px;width:40px;height:40px;border-radius:50%;background:#22bf9c;box-shadow:1px 2px 3px rgba(0,0,0,0.35);"></div>
<svg class="r" style="left:227.2px;top:888.8px;" width="28" height="24" viewBox="0 0 28 24"><path d="M2.4 12 H24.3 M15.6 3.6 L24.3 12 L15.6 20.4" fill="none" stroke="#fff" stroke-width="4.4" stroke-linecap="round" stroke-linejoin="round"/></svg>
<div class="r" style="left:691.7px;top:667.8px;width:40px;height:40px;border-radius:50%;background:#22bf9c;box-shadow:1px 2px 3px rgba(0,0,0,0.35);"></div>
<svg class="r" style="left:697.7px;top:675.8px;" width="28" height="24" viewBox="0 0 28 24"><path d="M2.4 12 H24.3 M15.6 3.6 L24.3 12 L15.6 20.4" fill="none" stroke="#fff" stroke-width="4.4" stroke-linecap="round" stroke-linejoin="round"/></svg>
</body></html>
